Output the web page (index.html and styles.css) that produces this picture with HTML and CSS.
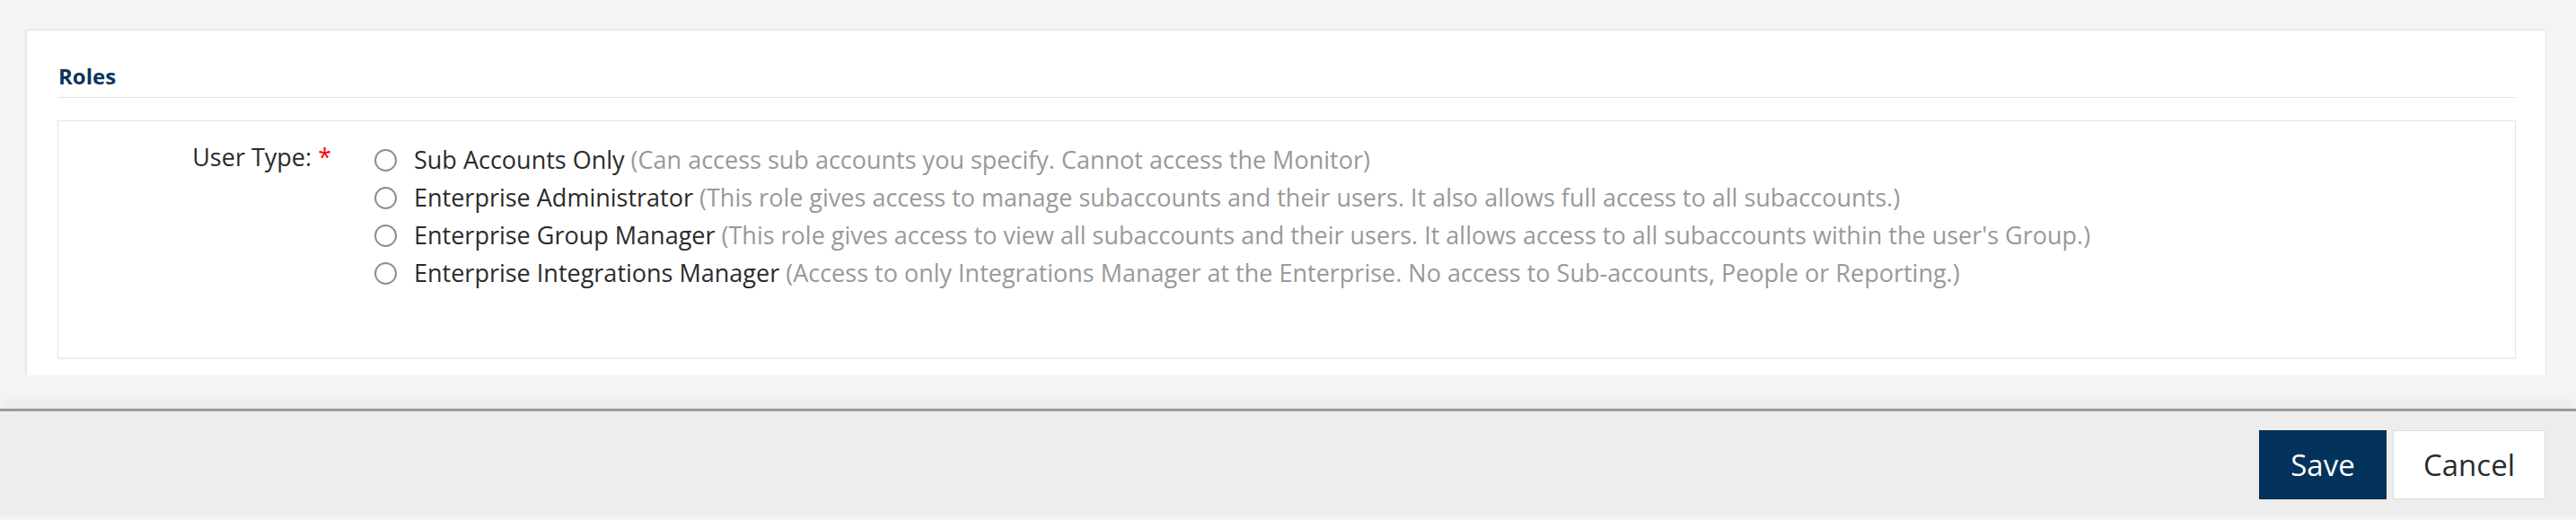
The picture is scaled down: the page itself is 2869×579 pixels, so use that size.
FILE: index.html
```html
<!DOCTYPE html>
<html lang="en">
<head>
    <meta charset="UTF-8">
    <meta name="viewport" content="width=device-width, initial-scale=1.0">
    <title>Roles</title>
    <link rel="stylesheet" href="styles.css">
</head>
<body>
    <main class="page">
        <section class="card">
            <h2 class="section-title">Roles</h2>
            <div class="field-box">
                <div class="field-row">
                    <label class="field-label">User Type: <span class="required">*</span></label>
                    <div class="radio-list">
                        <label class="radio-item">
                            <input type="radio" name="userType" value="sub">
                            <span class="radio-name">Sub Accounts Only</span>
                            <span class="radio-desc">(Can access sub accounts you specify. Cannot access the Monitor)</span>
                        </label>
                        <label class="radio-item">
                            <input type="radio" name="userType" value="admin">
                            <span class="radio-name">Enterprise Administrator</span>
                            <span class="radio-desc">(This role gives access to manage subaccounts and their users. It also allows full access to all subaccounts.)</span>
                        </label>
                        <label class="radio-item">
                            <input type="radio" name="userType" value="group">
                            <span class="radio-name">Enterprise Group Manager</span>
                            <span class="radio-desc">(This role gives access to view all subaccounts and their users. It allows access to all subaccounts within the user's Group.)</span>
                        </label>
                        <label class="radio-item">
                            <input type="radio" name="userType" value="integrations">
                            <span class="radio-name">Enterprise Integrations Manager</span>
                            <span class="radio-desc">(Access to only Integrations Manager at the Enterprise. No access to Sub-accounts, People or Reporting.)</span>
                        </label>
                    </div>
                </div>
            </div>
        </section>
    </main>

    <footer class="footer">
        <button class="btn btn-primary">Save</button>
        <button class="btn btn-default">Cancel</button>
    </footer>
</body>
</html>
```

FILE: styles.css
```css
* {
    margin: 0;
    padding: 0;
    box-sizing: border-box;
}

body {
    font-family: "Open Sans", Arial, sans-serif;
    background-color: #f4f4f4;
    color: #333;
    height: 579px;
    overflow: hidden;
}

.page {
    padding: 33px 33px 37px 29px;
}

.card {
    background-color: #fff;
    border: 1px solid #e3e3e3;
    border-bottom: none;
    box-shadow: -1px 0 2px rgba(0,0,0,0.04);
    padding: 0 33px 19px 34px;
}

.section-title {
    font-size: 24px;
    font-weight: 700;
    color: #0d355c;
    line-height: 36px;
    padding: 33px 0 5px 1px;
    border-bottom: 1px solid #e3e3e3;
    margin-bottom: 25px;
}

.field-box {
    border: 1px solid #e6e6e6;
    box-shadow: 0 1px 2px rgba(0,0,0,0.06);
    height: 265px;
    padding: 22px 0 0 0;
}

.field-row {
    display: flex;
    align-items: flex-start;
}

.field-label {
    width: 304px;
    text-align: right;
    font-size: 27px;
    line-height: 36px;
    color: #2b2b2b;
}

.required {
    color: #f00;
}

.radio-list {
    display: flex;
    flex-direction: column;
    margin-left: 48px;
}

.radio-item {
    display: flex;
    align-items: center;
    font-size: 27px;
    line-height: 42px;
    white-space: nowrap;
}

.radio-item input {
    appearance: none;
    -webkit-appearance: none;
    width: 25px;
    height: 25px;
    border: 2px solid #8e8e8e;
    border-radius: 50%;
    margin-right: 19px;
    flex-shrink: 0;
}

.radio-name {
    color: #2b2b2b;
    margin-right: 7px;
}

.radio-desc {
    color: #999;
}

.footer {
    border-top: 3px solid #999;
    background-color: #ededed;
    box-shadow: 0 -8px 14px rgba(0,0,0,0.04);
    height: 119px;
    display: flex;
    justify-content: flex-end;
    align-items: center;
    gap: 7px;
    padding-right: 34px;
    padding-top: 2px;
}

.btn {
    height: 77px;
    font-family: inherit;
    font-size: 33px;
    cursor: pointer;
}

.btn-primary {
    width: 142px;
    border: none;
    background-color: #03325a;
    color: #fff;
}

.btn-default {
    width: 170px;
    border: 1px solid #ddd;
    background-color: #fff;
    color: #2b2b2b;
}
```
